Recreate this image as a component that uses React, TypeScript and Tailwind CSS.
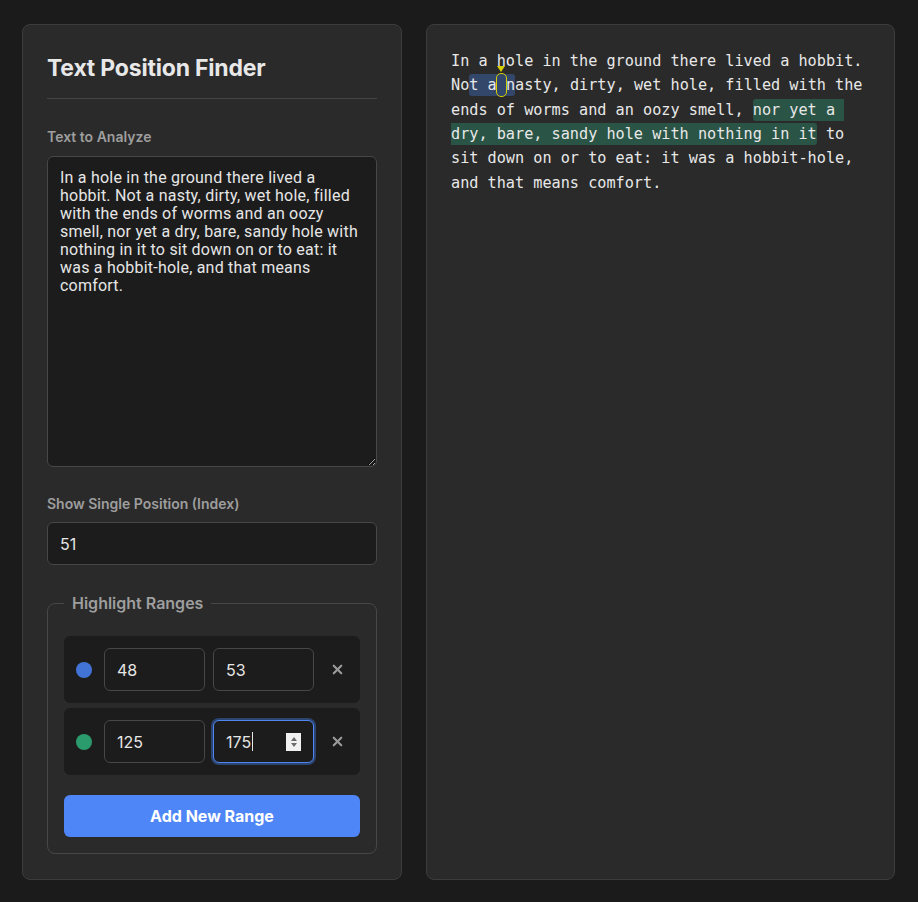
import React from "react";
import { X } from "lucide-react";

const TEXT =
  "In a hole in the ground there lived a hobbit. Not a nasty, dirty, wet hole, filled with the ends of worms and an oozy smell, nor yet a dry, bare, sandy hole with nothing in it to sit down on or to eat: it was a hobbit-hole, and that means comfort.";

const RANGES = [
  { start: 48, end: 53, bg: "bg-[#33476b]" },
  { start: 125, end: 175, bg: "bg-[#2a5445]" },
];
const MARK = 51;

function rangeOf(i: number) {
  for (let r = 0; r < RANGES.length; r++) {
    if (i >= RANGES[r].start && i < RANGES[r].end) return r;
  }
  return -1;
}

function Marker({ ch }: { ch: string }) {
  return (
    <span className="relative rounded-[4px] py-[2px] outline-1 outline-solid outline-[#d6d000]">
      <span className="absolute left-1/2 -translate-x-1/2 bottom-full mb-[2px] w-0 h-0 border-l-[4px] border-r-[4px] border-t-[6px] border-b-0 border-l-transparent border-r-transparent border-t-[#d6d000]" />
      {ch}
    </span>
  );
}

function renderChunk(s: number, e: number) {
  if (MARK >= s && MARK < e) {
    return (
      <>
        {TEXT.slice(s, MARK)}
        <Marker ch={TEXT[MARK]} />
        {TEXT.slice(MARK + 1, e)}
      </>
    );
  }
  return TEXT.slice(s, e);
}

function Highlighted() {
  const groups: { s: number; e: number; r: number }[] = [];
  let i = 0;
  while (i < TEXT.length) {
    const r = rangeOf(i);
    let j = i + 1;
    while (j < TEXT.length && rangeOf(j) === r) j++;
    groups.push({ s: i, e: j, r });
    i = j;
  }
  return (
    <>
      {groups.map((g, k) =>
        g.r >= 0 ? (
          <span key={k} className={`${RANGES[g.r].bg} rounded-[3px] py-[2px]`}>
            {renderChunk(g.s, g.e)}
          </span>
        ) : (
          <React.Fragment key={k}>{renderChunk(g.s, g.e)}</React.Fragment>
        )
      )}
    </>
  );
}

function RangeRow({
  color,
  a,
  b,
  focused,
}: {
  color: string;
  a: string;
  b: string;
  focused?: boolean;
}) {
  return (
    <div className="flex items-center gap-3 p-3 rounded-[6px] bg-[#1c1c1c]">
      <span className={`w-4 h-4 rounded-full shrink-0 ${color}`} />
      <div className="flex flex-1 gap-2">
        <input
          readOnly
          value={a}
          className="w-0 flex-1 h-[43px] px-[12px] rounded-[6px] bg-[#1c1c1c] border border-[#474747] text-[16px] text-[#e6e6e6] outline-none"
        />
        {focused ? (
          <div className="w-0 flex-1 h-[43px] flex items-center pl-[12px] pr-[12px] rounded-[6px] bg-[#1c1c1c] border border-[#4f86f0] ring-2 ring-[#2b4470] text-[16px] text-[#e6e6e6]">
            <span>{b}</span>
            <span className="w-[1px] h-[19px] bg-[#e6e6e6] ml-[1px]" />
            <span className="ml-auto w-[15px] h-[18px] bg-[#f1f1f1] flex flex-col items-center justify-center gap-[2px]">
              <span className="w-0 h-0 border-l-[3.5px] border-r-[3.5px] border-b-[4px] border-t-0 border-l-transparent border-r-transparent border-b-[#6b6b6b]" />
              <span className="w-0 h-0 border-l-[3.5px] border-r-[3.5px] border-t-[4px] border-b-0 border-l-transparent border-r-transparent border-t-[#6b6b6b]" />
            </span>
          </div>
        ) : (
          <input
            readOnly
            value={b}
            className="w-0 flex-1 h-[43px] px-[12px] rounded-[6px] bg-[#1c1c1c] border border-[#474747] text-[16px] text-[#e6e6e6] outline-none"
          />
        )}
      </div>
      <button className="w-[22px] h-[22px] flex items-center justify-center text-[#9a9a9a] shrink-0">
        <X size={15} strokeWidth={3.4} />
      </button>
    </div>
  );
}

export default function App() {
  return (
    <div
      className="w-[918px] h-[902px] bg-[#1b1b1b] flex gap-[24px] pl-[22px] pr-[23px] pt-[24px] pb-[22px]"
      style={{ fontFamily: 'Inter, "Liberation Sans", Arial, sans-serif' }}
    >
      <div className="w-[380px] shrink-0 bg-[#2a2a2a] border border-[#3c3c3c] rounded-[8px] p-[24px] flex flex-col">
        <h1 className="mt-[5px] text-[23px] leading-[29px] font-bold tracking-[-0.2px] text-[#e8e8e8] pb-[15px] border-b border-[#454545]">
          Text Position Finder
        </h1>
        <label className="mt-[30px] mb-[11px] text-[14px] leading-[16px] font-semibold text-[#9e9e9e]">
          Text to Analyze
        </label>
        <textarea
          readOnly
          value={TEXT}
          className="h-[311px] pl-[12px] pr-[12px] pt-[12px] pb-[12px] rounded-[6px] bg-[#1c1c1c] border border-[#474747] text-[16px] leading-[18px] tracking-[0.22px] text-[#e6e6e6] outline-none font-['Roboto',sans-serif]"
        />
        <label className="mt-[29px] mb-[10px] text-[14px] leading-[16px] font-semibold text-[#9e9e9e]">
          Show Single Position (Index)
        </label>
        <input
          readOnly
          value="51"
          className="h-[43px] px-[12px] rounded-[6px] bg-[#1c1c1c] border border-[#474747] text-[16px] text-[#e6e6e6] outline-none"
        />
        <fieldset className="mt-[29px] border border-[#474747] rounded-[8px] px-4 pt-[24px] pb-4 m-0 min-w-0">
          <legend className="px-2 text-[16px] leading-[18px] font-semibold text-[#9e9e9e]">
            Highlight Ranges
          </legend>
          <div className="flex flex-col gap-[5px]">
            <RangeRow color="bg-[#4174d6]" a="48" b="53" />
            <RangeRow color="bg-[#2b9a6c]" a="125" b="175" focused />
          </div>
          <button className="mt-[20px] w-full h-[42px] rounded-[6px] bg-[#4f86f7] text-white text-[16px] font-bold">
            Add New Range
          </button>
        </fieldset>
      </div>
      <div className="flex-1 bg-[#2a2a2a] border border-[#3c3c3c] rounded-[8px] p-[24px]">
        <div
          className="text-[15.2px] leading-[1.6] text-[#e8e8e8] whitespace-pre-wrap break-words"
          style={{ fontFamily: '"DejaVu Sans Mono", "Liberation Mono", monospace' }}
        >
          <Highlighted />
        </div>
      </div>
    </div>
  );
}
